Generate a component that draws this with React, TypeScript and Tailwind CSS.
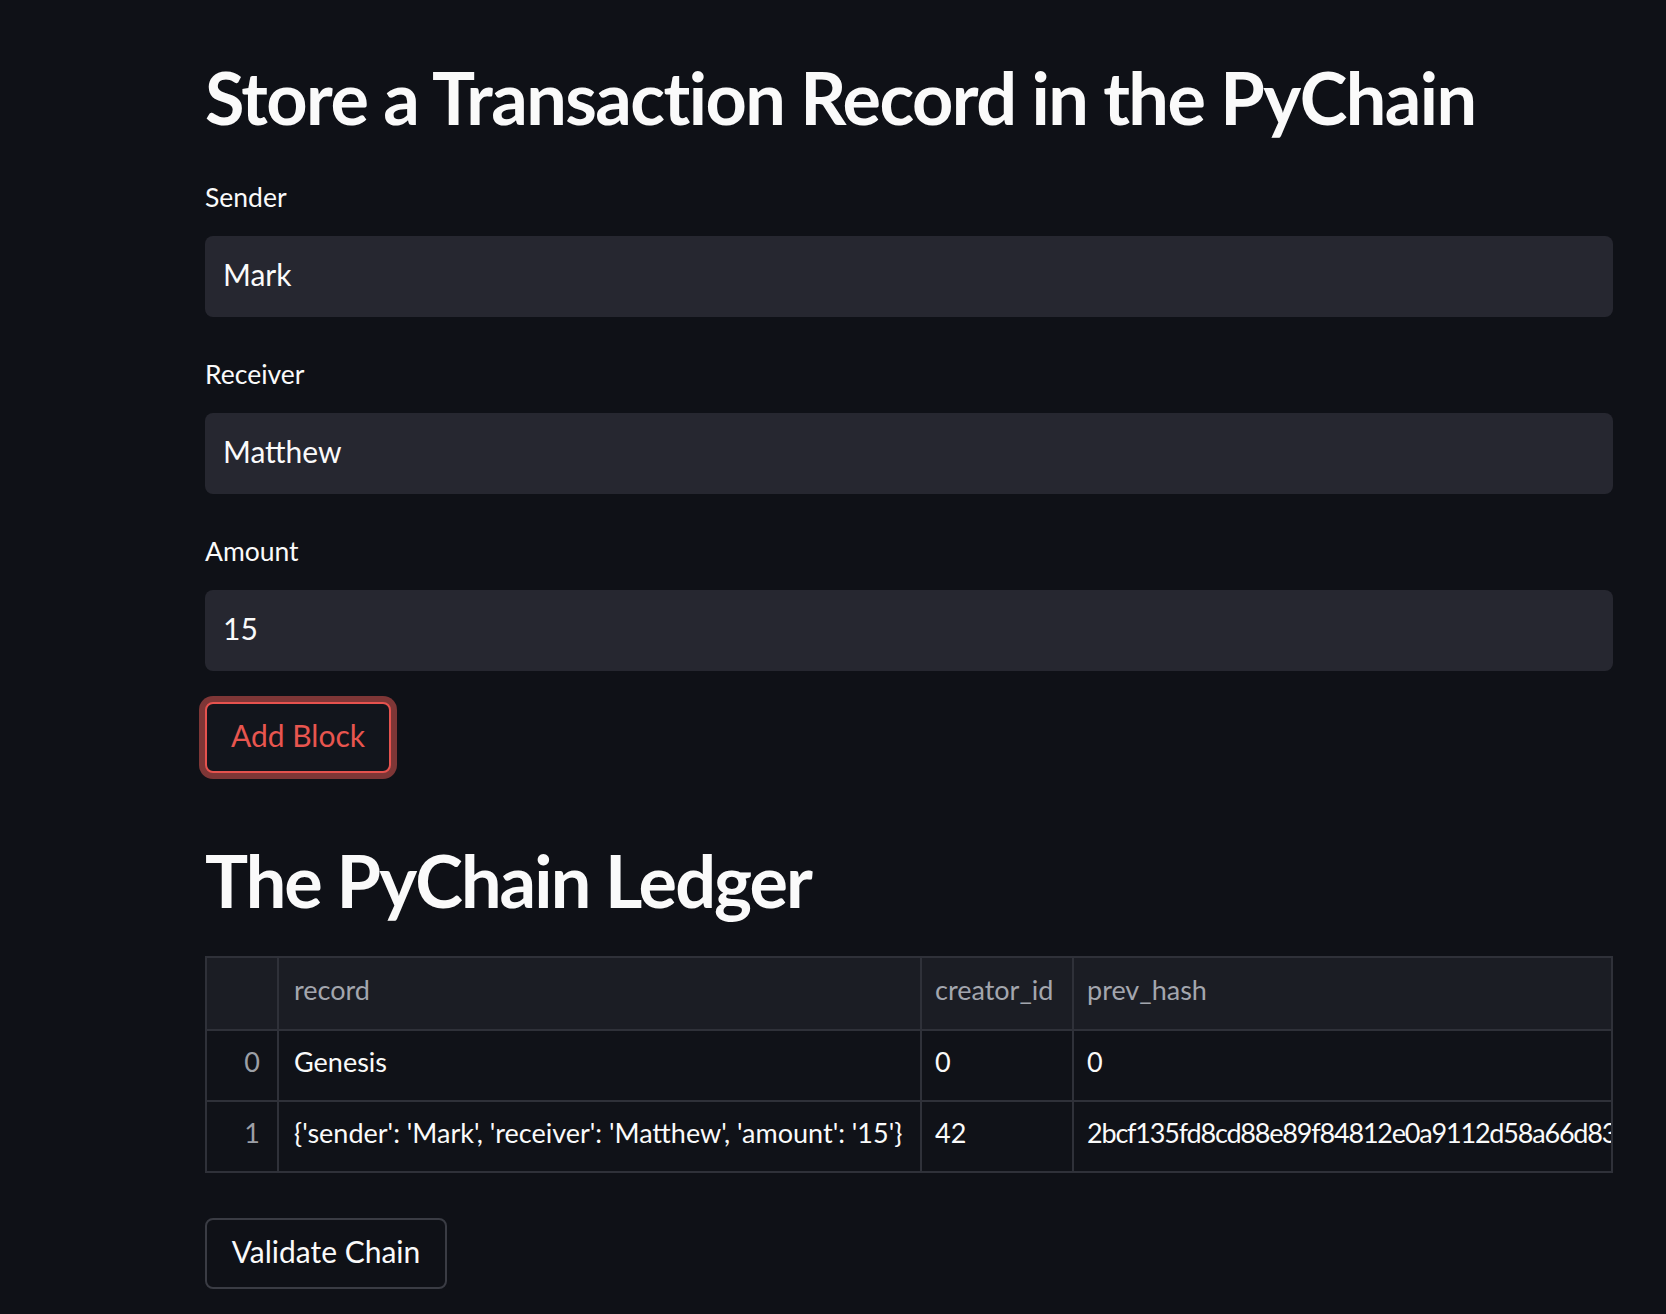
import React from 'react';

const font = { fontFamily: 'Lato, "Noto Sans", sans-serif' };

function TextField({ label, value }: { label: string; value: string }) {
  return (
    <div>
      <div className="h-[25px] text-[26.5px] leading-none text-[#fafafa]">{label}</div>
      <div className="mt-[27px] flex h-[81px] items-center rounded-[8px] bg-[#262730] px-[18px] pb-[6px] text-[30px] leading-none text-[#fafafa]">
        {value}
      </div>
    </div>
  );
}

const rows = [
  { idx: '0', record: 'Genesis', creator: '0', hash: '0' },
  {
    idx: '1',
    record: "{'sender': 'Mark', 'receiver': 'Matthew', 'amount': '15'}",
    creator: '42',
    hash: '2bcf135fd8cd88e89f84812e0a9112d58a66d83e5f0c1b7a9d2e64f0b31c8a57',
  },
];

const cell = 'border-2 border-[#2f3139] pb-[8px]';

export default function App() {
  return (
    <div className="min-h-[1314px] bg-[#0f1117] text-[#fafafa]" style={font}>
      <div className="ml-[205px] w-[1408px] pt-[61px]">
        <h1 className="h-[72px] text-[72px] font-bold leading-none tracking-[-1.55px]">
          Store a Transaction Record in the PyChain
        </h1>

        <div className="mt-[51px] flex flex-col gap-[44px]">
          <TextField label="Sender" value="Mark" />
          <TextField label="Receiver" value="Matthew" />
          <TextField label="Amount" value="15" />
        </div>

        <button className="mt-[31px] flex h-[71px] w-[186px] items-center justify-center rounded-[8px] border-2 border-[#e5524e] bg-[#12151c] pb-[6px] text-[30px] leading-none text-[#e8554f] shadow-[0_0_0_6px_#7e3636]">
          Add Block
        </button>

        <h2 className="mt-[71px] h-[72px] text-[72px] font-bold leading-none tracking-[-1.9px]">
          The PyChain Ledger
        </h2>

        <table className="mt-[40px] w-[1408px] table-fixed border-collapse border-2 border-[#2f3139] text-[27px] leading-none">
          <colgroup>
            <col className="w-[72px]" />
            <col className="w-[643px]" />
            <col className="w-[152px]" />
            <col />
          </colgroup>
          <thead>
            <tr className="h-[73px] bg-[#1b1d24] text-[#a3a6ae]">
              <th className={cell} />
              <th className={`${cell} px-[15px] text-left font-normal`}>record</th>
              <th className={`${cell} px-[13px] text-left font-normal`}>creator_id</th>
              <th className={`${cell} px-[13px] text-left font-normal`}>prev_hash</th>
            </tr>
          </thead>
          <tbody>
            {rows.map((r) => (
              <tr key={r.idx} className="h-[71px] bg-[#101218]">
                <td className={`${cell} pr-[17px] text-right text-[#9c9fa6]`}>{r.idx}</td>
                <td className={`${cell} whitespace-nowrap px-[15px]`}>{r.record}</td>
                <td className={`${cell} px-[13px]`}>{r.creator}</td>
                <td className={`${cell} overflow-hidden whitespace-nowrap pl-[13px] tracking-[-1.2px]`}>{r.hash}</td>
              </tr>
            ))}
          </tbody>
        </table>

        <button className="mt-[45px] flex h-[71px] w-[242px] items-center justify-center rounded-[8px] border-2 border-[#3a3c44] bg-[#0f1117] pb-[6px] text-[30px] leading-none text-[#fafafa]">
          Validate Chain
        </button>
      </div>
    </div>
  );
}
